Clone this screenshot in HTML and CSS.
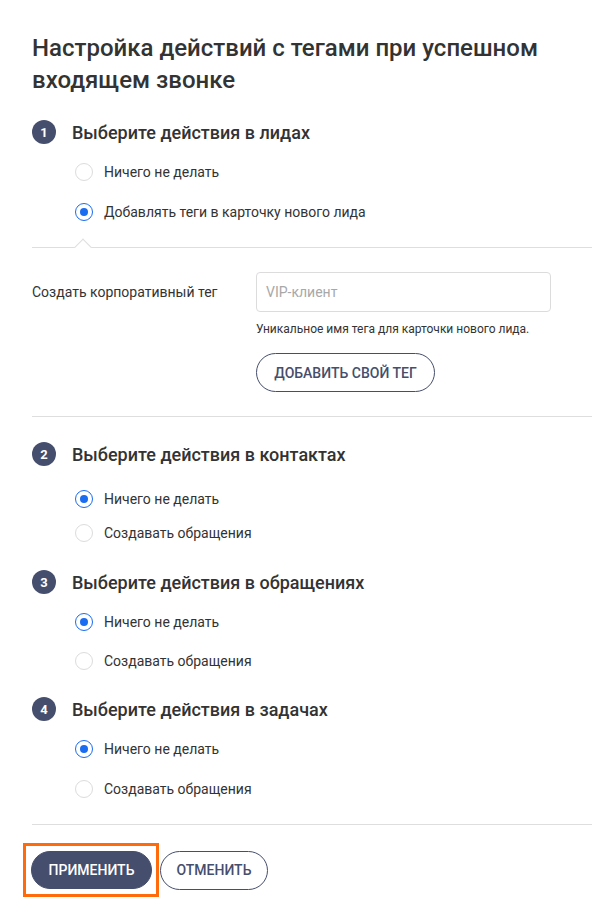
FILE: index.html
```html
<!DOCTYPE html>
<html lang="ru">
<head>
<meta charset="utf-8">
<title>Настройка действий с тегами</title>
<link rel="stylesheet" href="styles.css">
</head>
<body>
<div class="page">
  <h1 class="title">Настройка действий с тегами при успешном входящем звонке</h1>

  <section class="step step-1">
    <div class="step-head"><span class="num">1</span><span class="step-title">Выберите действия в лидах</span></div>
    <div class="options">
      <label class="opt"><span class="radio"></span>Ничего не делать</label>
      <label class="opt"><span class="radio checked"></span>Добавлять теги в карточку нового лида</label>
    </div>
  </section>

  <div class="divider caret"></div>

  <div class="tag-form">
    <div class="form-label">Создать корпоративный тег</div>
    <div class="form-field">
      <div class="input"><span class="placeholder">VIP-клиент</span></div>
      <div class="hint">Уникальное имя тега для карточки нового лида.</div>
      <button class="btn btn-outline btn-add">ДОБАВИТЬ СВОЙ ТЕГ</button>
    </div>
  </div>

  <div class="divider"></div>

  <section class="step step-2">
    <div class="step-head"><span class="num">2</span><span class="step-title">Выберите действия в контактах</span></div>
    <div class="options">
      <label class="opt"><span class="radio checked"></span>Ничего не делать</label>
      <label class="opt"><span class="radio"></span>Создавать обращения</label>
    </div>
  </section>

  <section class="step step-3">
    <div class="step-head"><span class="num">3</span><span class="step-title">Выберите действия в обращениях</span></div>
    <div class="options">
      <label class="opt"><span class="radio checked"></span>Ничего не делать</label>
      <label class="opt"><span class="radio"></span>Создавать обращения</label>
    </div>
  </section>

  <section class="step step-4">
    <div class="step-head"><span class="num">4</span><span class="step-title">Выберите действия в задачах</span></div>
    <div class="options">
      <label class="opt"><span class="radio checked"></span>Ничего не делать</label>
      <label class="opt"><span class="radio"></span>Создавать обращения</label>
    </div>
  </section>

  <div class="divider bottom"></div>

  <div class="actions">
    <div class="highlight"><button class="btn btn-fill">ПРИМЕНИТЬ</button></div>
    <button class="btn btn-outline btn-cancel">ОТМЕНИТЬ</button>
  </div>
</div>
</body>
</html>
```

FILE: styles.css
```css
html, body {
  margin: 0;
  padding: 0;
  background: #fff;
}
body {
  font-family: Roboto, "Liberation Sans", Arial, sans-serif;
  color: #333;
}
.page {
  padding: 32px 0 0 32px;
}
.title {
  margin: 0;
  font-size: 24px;
  line-height: 32px;
  font-weight: 500;
  color: #333;
  padding-right: 32px;
}
.step-head {
  display: flex;
  align-items: center;
  height: 24px;
}
.num {
  width: 24px;
  height: 24px;
  border-radius: 50%;
  background: #454e6c;
  color: #fff;
  font-size: 13px;
  font-weight: 700;
  display: flex;
  align-items: center;
  justify-content: center;
  margin-right: 16px;
}
.step-title {
  font-size: 18px;
  font-weight: 500;
  color: #333;
}
.options {
  display: flex;
  flex-direction: column;
  padding-left: 43px;
  margin-top: 8px;
}
.opt {
  display: flex;
  align-items: center;
  height: 40px;
  font-size: 14px;
  color: #333;
}
.radio {
  width: 18px;
  height: 18px;
  box-sizing: border-box;
  border: 1px solid #dcdcdc;
  border-radius: 50%;
  margin-right: 11px;
  display: flex;
  align-items: center;
  justify-content: center;
}
.radio.checked {
  border: 1.5px solid #1a6cf0;
}
.radio.checked::after {
  content: "";
  width: 8px;
  height: 8px;
  border-radius: 50%;
  background: #1a6cf0;
}
.step-1 { margin-top: 24px; }

.divider {
  height: 1px;
  background: #dedede;
  position: relative;
}
.divider.caret { margin-top: 15px; }
.divider.caret::before {
  content: "";
  position: absolute;
  left: 45px;
  top: -6px;
  width: 11px;
  height: 11px;
  background: #fff;
  border-left: 1px solid #dedede;
  border-top: 1px solid #dedede;
  transform: rotate(45deg);
}
.tag-form {
  display: flex;
  padding-top: 24px;
  padding-bottom: 24px;
}
.form-label {
  width: 224px;
  font-size: 14px;
  line-height: 40px;
  color: #333;
}
.form-field {
  display: flex;
  flex-direction: column;
  align-items: flex-start;
}
.input {
  width: 295px;
  height: 40px;
  box-sizing: border-box;
  border: 1px solid #dcdcdc;
  border-radius: 4px;
  display: flex;
  align-items: center;
  padding-left: 9px;
}
.placeholder {
  font-size: 14px;
  color: #a8a8a8;
}
.hint {
  font-size: 12px;
  color: #333;
  margin-top: 10px;
  line-height: 14px;
}
.btn {
  font-family: Roboto, "Liberation Sans", Arial, sans-serif;
  font-size: 14px;
  font-weight: 500;
  height: 39px;
  border-radius: 20px;
  padding: 0;
  cursor: pointer;
  white-space: nowrap;
}
.btn-outline {
  background: #fff;
  border: 1px solid #454e6c;
  color: #454e6c;
}
.btn-fill {
  background: #454e6c;
  border: 1px solid #454e6c;
  color: #fff;
}
.btn-add {
  margin-top: 17px;
  width: 179px;
}

.step-2 { margin-top: 25px; }
.step-2 .options { margin-top: 16px; }
.step-2 .opt { height: 34px; }
.step-3 { margin-top: 20px; }
.step-3 .opt { height: 39px; }
.step-4 { margin-top: 17px; }

.divider.bottom { margin-top: 15px; }

.actions {
  display: flex;
  align-items: center;
  margin-top: 18px;
  margin-left: -9px;
}
.highlight {
  border: 3px solid #ff6b0a;
  padding: 5px 4px 5px 5px;
  display: flex;
}
.highlight .btn { width: 121px; height: 38px; }
.btn-cancel {
  margin-left: 1px;
  width: 108px;
}
```
